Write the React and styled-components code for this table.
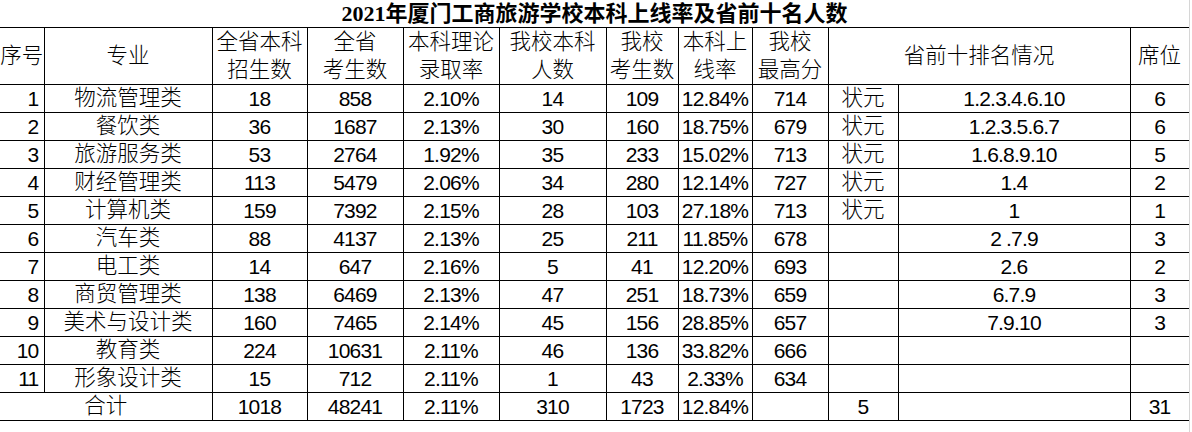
import styled, { createGlobalStyle } from "styled-components";

const GlobalStyle = createGlobalStyle`
  html, body {
    margin: 0;
    padding: 0;
    background: #ffffff;
  }
  body {
    font-family: "Liberation Sans", "Noto Sans CJK SC", sans-serif;
    color: #000000;
  }
`;

const Page = styled.div`
  width: 1189px;
  height: 432px;
  border-right: 1px solid #d6d6d6;
  overflow: hidden;
`;

const Sheet = styled.table`
  border-collapse: collapse;
  table-layout: fixed;
  width: 1189px;
`;

const TitleCell = styled.td`
  height: 27px;
  padding: 0;
  text-align: center;
  vertical-align: middle;
  font-family: "Liberation Serif", "Noto Sans CJK SC", serif;
  font-size: 22px;
  font-weight: 700;
  line-height: 27px;
  border-bottom: 1px solid #000;
`;

const HeadCell = styled.td`
  height: 55px;
  padding: 0;
  text-align: center;
  vertical-align: middle;
  font-size: 21.5px;
  font-weight: 300;
  line-height: 28px;
  border: 1px solid #000;
  &:first-child {
    border-left: none;
  }
`;

const Cell = styled.td`
  height: 27px;
  padding: ${(p) => (p.$align === "right" ? "0 5px 0 0" : "0")};
  text-align: ${(p) => p.$align || "center"};
  vertical-align: middle;
  font-size: ${(p) => (p.$num ? "21px" : "21.5px")};
  font-weight: 300;
  letter-spacing: ${(p) => (p.$num ? "-0.8px" : "0")};
  line-height: 27px;
  white-space: nowrap;
  overflow: visible;
  border: 1px solid #000;
  &:first-child {
    border-left: none;
  }
`;

const widths = [44, 168, 95, 96, 96, 107, 72, 74, 76, 70, 232, 59];

const rows = [
  [1, "物流管理类", 18, 858, "2.10%", 14, 109, "12.84%", 714, "状元", "1.2.3.4.6.10", 6],
  [2, "餐饮类", 36, 1687, "2.13%", 30, 160, "18.75%", 679, "状元", "1.2.3.5.6.7", 6],
  [3, "旅游服务类", 53, 2764, "1.92%", 35, 233, "15.02%", 713, "状元", "1.6.8.9.10", 5],
  [4, "财经管理类", 113, 5479, "2.06%", 34, 280, "12.14%", 727, "状元", "1.4", 2],
  [5, "计算机类", 159, 7392, "2.15%", 28, 103, "27.18%", 713, "状元", "1", 1],
  [6, "汽车类", 88, 4137, "2.13%", 25, 211, "11.85%", 678, "", "2 .7.9", 3],
  [7, "电工类", 14, 647, "2.16%", 5, 41, "12.20%", 693, "", "2.6", 2],
  [8, "商贸管理类", 138, 6469, "2.13%", 47, 251, "18.73%", 659, "", "6.7.9", 3],
  [9, "美术与设计类", 160, 7465, "2.14%", 45, 156, "28.85%", 657, "", "7.9.10", 3],
  [10, "教育类", 224, 10631, "2.11%", 46, 136, "33.82%", 666, "", "", ""],
  [11, "形象设计类", 15, 712, "2.11%", 1, 43, "2.33%", 634, "", "", ""],
];

const isText = (v) => typeof v === "string" && /[\u4e00-\u9fff]/.test(v);

const App = () => {
  return (
    <>
      <GlobalStyle />
      <Page>
        <Sheet>
          <colgroup>
            {widths.map((w, i) => (
              <col key={i} style={{ width: w }} />
            ))}
          </colgroup>
          <tbody>
            <tr>
              <TitleCell colSpan={12}>
                2021年厦门工商旅游学校本科上线率及省前十名人数
              </TitleCell>
            </tr>
            <tr>
              <HeadCell>序号</HeadCell>
              <HeadCell>专业</HeadCell>
              <HeadCell>
                全省本科
                <br />
                招生数
              </HeadCell>
              <HeadCell>
                全省
                <br />
                考生数
              </HeadCell>
              <HeadCell>
                本科理论
                <br />
                录取率
              </HeadCell>
              <HeadCell>
                我校本科
                <br />
                人数
              </HeadCell>
              <HeadCell>
                我校
                <br />
                考生数
              </HeadCell>
              <HeadCell>
                本科上
                <br />
                线率
              </HeadCell>
              <HeadCell>
                我校
                <br />
                最高分
              </HeadCell>
              <HeadCell colSpan={2}>省前十排名情况</HeadCell>
              <HeadCell>席位</HeadCell>
            </tr>
            {rows.map((row) => (
              <tr key={row[0]}>
                {row.map((v, i) => (
                  <Cell
                    key={i}
                    $num={!isText(v)}
                    $align={i === 0 ? "right" : "center"}
                  >
                    {v}
                  </Cell>
                ))}
              </tr>
            ))}
            <tr>
              <Cell colSpan={2}>合计</Cell>
              <Cell $num>1018</Cell>
              <Cell $num>48241</Cell>
              <Cell $num>2.11%</Cell>
              <Cell $num>310</Cell>
              <Cell $num>1723</Cell>
              <Cell $num>12.84%</Cell>
              <Cell $num></Cell>
              <Cell $num>5</Cell>
              <Cell $num></Cell>
              <Cell $num>31</Cell>
            </tr>
          </tbody>
        </Sheet>
      </Page>
    </>
  );
};

export default App;
